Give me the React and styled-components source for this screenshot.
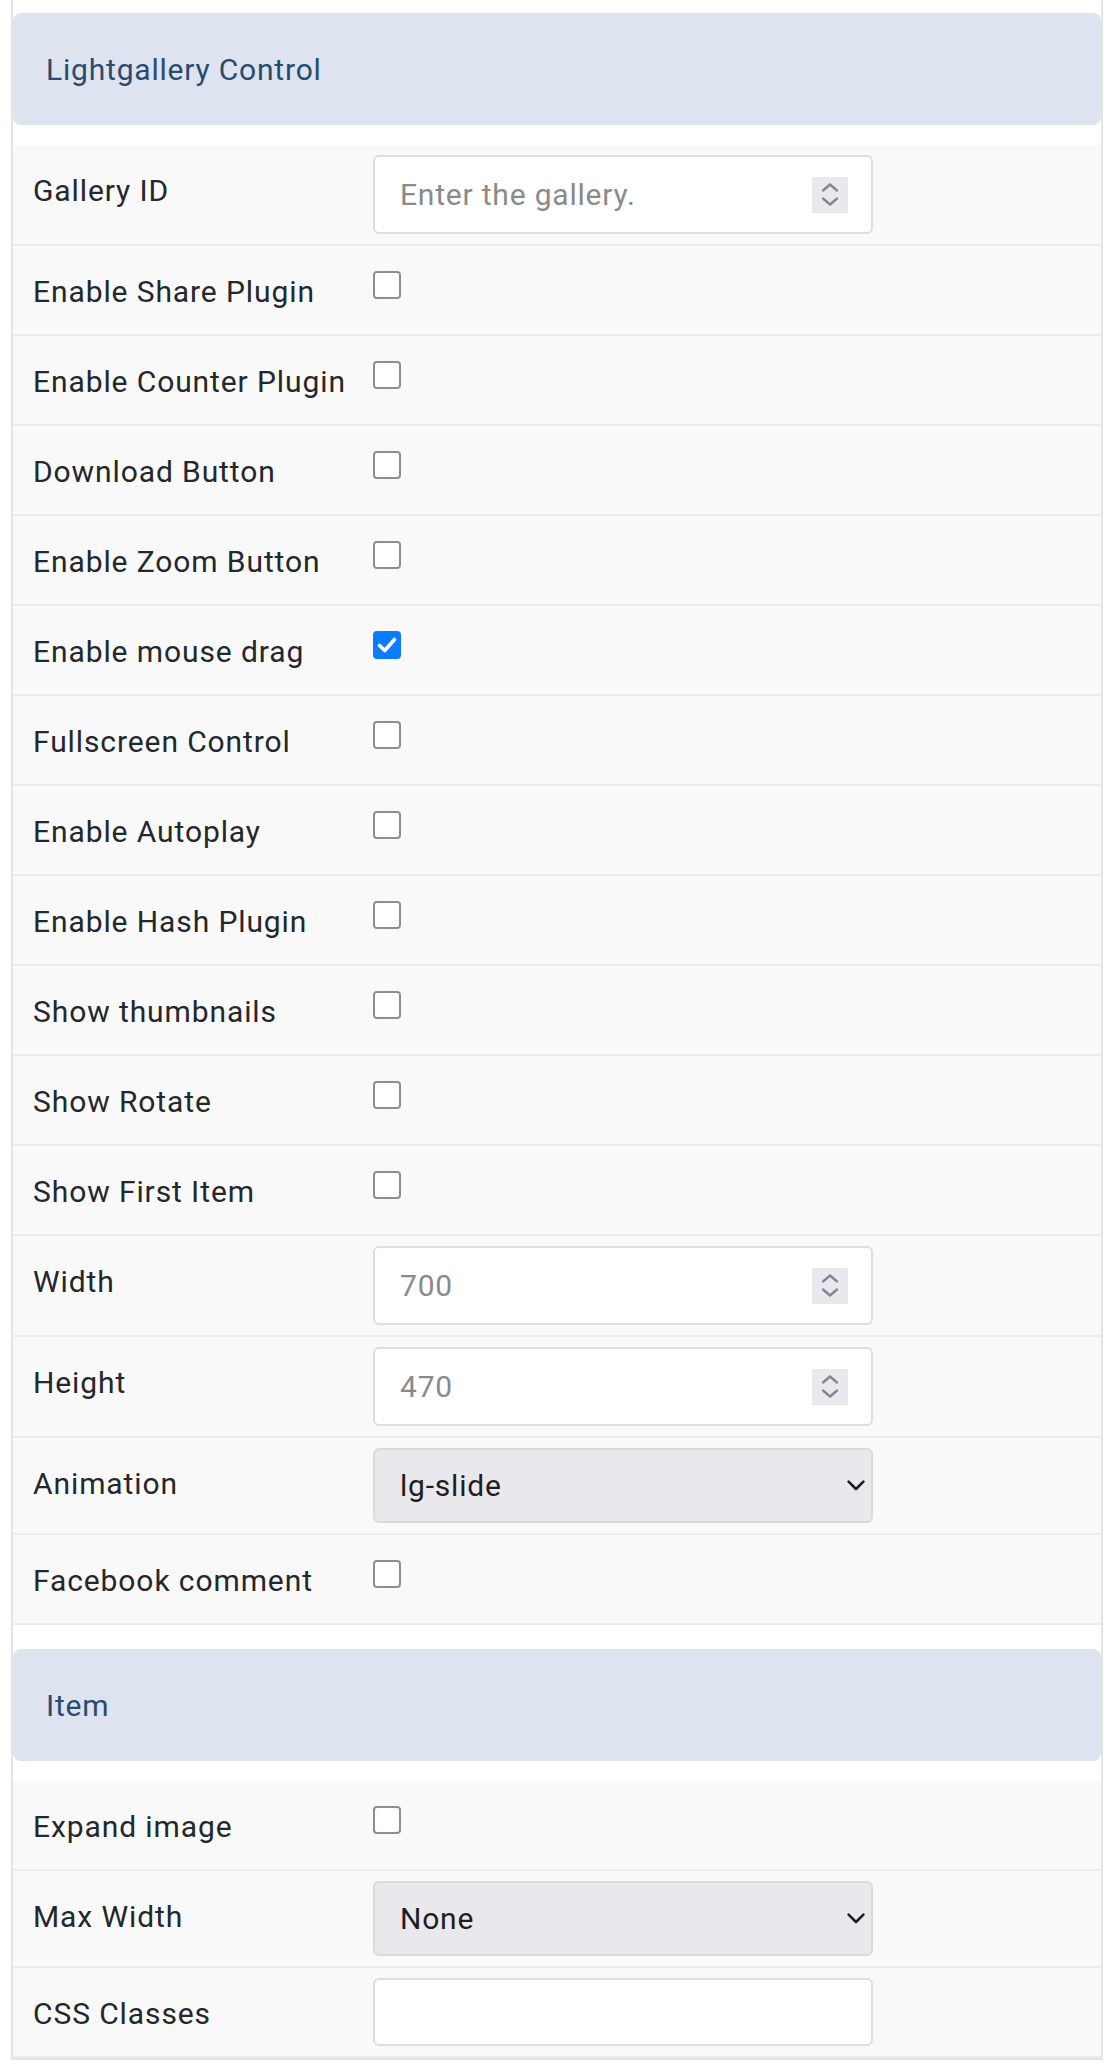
import React from "react"
import styled, { createGlobalStyle } from "styled-components"

const GlobalStyle = createGlobalStyle`
  * { box-sizing: border-box; }
  body {
    margin: 0;
    background: #ffffff;
    font-family: Roboto, "Liberation Sans", Arial, sans-serif;
    color: #212529;
  }
`

const sections = [
  {
    title: "Lightgallery Control",
    fields: [
      { label: "Gallery ID", kind: "number", placeholder: "Enter the gallery." },
      { label: "Enable Share Plugin", kind: "check" },
      { label: "Enable Counter Plugin", kind: "check" },
      { label: "Download Button", kind: "check" },
      { label: "Enable Zoom Button", kind: "check" },
      { label: "Enable mouse drag", kind: "check", checked: true },
      { label: "Fullscreen Control", kind: "check" },
      { label: "Enable Autoplay", kind: "check" },
      { label: "Enable Hash Plugin", kind: "check" },
      { label: "Show thumbnails", kind: "check" },
      { label: "Show Rotate", kind: "check" },
      { label: "Show First Item", kind: "check" },
      { label: "Width", kind: "number", placeholder: "700" },
      { label: "Height", kind: "number", placeholder: "470" },
      { label: "Animation", kind: "select", value: "lg-slide" },
      { label: "Facebook comment", kind: "check" },
    ],
  },
  {
    title: "Item",
    fields: [
      { label: "Expand image", kind: "check" },
      { label: "Max Width", kind: "select", value: "None" },
      { label: "CSS Classes", kind: "text" },
    ],
  },
]

function Spinner() {
  return (
    <SpinBox>
      <svg width="36" height="36" viewBox="0 0 36 36">
        <path
          d="M11 13.5 L18 7.5 L25 13.5 M11 21.5 L18 27.5 L25 21.5"
          fill="none"
          stroke="#87849a"
          strokeWidth="2.4"
          strokeLinecap="round"
          strokeLinejoin="round"
        />
      </svg>
    </SpinBox>
  )
}

function Checkbox({ checked }) {
  return (
    <Box $checked={checked} role="checkbox" aria-checked={!!checked}>
      {checked && (
        <svg width="24" height="24" viewBox="0 0 24 24">
          <path
            d="M4.5 12.5 L9.8 17.5 L19.5 6.5"
            fill="none"
            stroke="#ffffff"
            strokeWidth="3.6"
            strokeLinecap="round"
            strokeLinejoin="round"
          />
        </svg>
      )}
    </Box>
  )
}

function Control({ field }) {
  if (field.kind === "check") return <Checkbox checked={field.checked} />
  if (field.kind === "select")
    return (
      <SelectBox>
        <Select defaultValue={field.value}>
          <option>{field.value}</option>
        </Select>
        <Chevron width="18" height="11" viewBox="0 0 18 11">
          <path
            d="M1.6 1.6 L9 9 L16.4 1.6"
            fill="none"
            stroke="#1e1e1e"
            strokeWidth="2.6"
            strokeLinecap="round"
            strokeLinejoin="round"
          />
        </Chevron>
      </SelectBox>
    )
  if (field.kind === "text")
    return (
      <Field $short>
        <Input type="text" />
      </Field>
    )
  return (
    <Field>
      <Input type="text" placeholder={field.placeholder} />
      <Spinner />
    </Field>
  )
}

function App() {
  return (
    <>
      <GlobalStyle />
      <Panel>
        {sections.map((s) => (
          <Section key={s.title}>
            <Header>{s.title}</Header>
            {s.fields.map((f) => (
              <Row key={f.label}>
                <Label>{f.label}</Label>
                <Cell>
                  <Control field={f} />
                </Cell>
              </Row>
            ))}
          </Section>
        ))}
      </Panel>
    </>
  )
}

export default App

const Panel = styled.div`
  margin-left: 11px;
  width: 1092px;
  border-left: 2px solid #e4e4e4;
  border-right: 2px solid #e4e4e4;
  border-bottom: 2px solid #e4e4e4;
`
const Section = styled.section`
  padding-top: 13px;
  & + & {
    margin-top: 11px;
  }
`
const Header = styled.h2`
  margin: 0 0 20px;
  height: 112px;
  display: flex;
  align-items: center;
  padding: 0 33px;
  background: #dde4f0;
  border-radius: 8px;
  color: #2b4a6f;
  font-size: 30px;
  font-weight: 400;
  letter-spacing: 0.8px;
`
const Row = styled.div`
  display: grid;
  grid-template-columns: 340px 1fr;
  padding: 10px 0 10px 20px;
  background: #f9f9f9;
  border-bottom: 2px solid #ececec;
`
const Label = styled.label`
  padding: 13px 0 10px;
  font-size: 30px;
  line-height: 45px;
  letter-spacing: 0.9px;
  white-space: nowrap;
  color: #24272b;
`
const Cell = styled.div`
  display: flex;
  align-items: flex-start;
`
const Box = styled.span`
  margin-top: 15px;
  width: 28px;
  height: 28px;
  border-radius: 4px;
  border: ${(p) => (p.$checked ? "none" : "2px solid #8e8b9b")};
  background: ${(p) => (p.$checked ? "#0b7cff" : "#ffffff")};
  display: flex;
  align-items: center;
  justify-content: center;
`
const Field = styled.div`
  width: 500px;
  height: ${(p) => (p.$short ? "68px" : "79px")};
  display: flex;
  align-items: center;
  padding: 0 23px 0 25px;
  background: #ffffff;
  border: 2px solid #dedede;
  border-radius: 6px;
`
const Input = styled.input`
  flex: 1;
  min-width: 0;
  border: none;
  outline: none;
  background: transparent;
  padding: 0;
  font-family: inherit;
  font-size: 30px;
  letter-spacing: 0.8px;
  color: #212529;
  &::placeholder {
    color: #8a8a8a;
  }
`
const SpinBox = styled.span`
  width: 36px;
  height: 36px;
  background: #e9e9ed;
  display: flex;
`
const SelectBox = styled.div`
  position: relative;
  width: 500px;
  height: 75px;
`
const Select = styled.select`
  appearance: none;
  width: 100%;
  height: 100%;
  padding: 0 40px 0 25px;
  background: #e9e9ed;
  border: 2px solid #dadada;
  border-radius: 6px;
  font-family: inherit;
  font-size: 30px;
  letter-spacing: 0.8px;
  color: #1e1e1e;
  outline: none;
`
const Chevron = styled.svg`
  position: absolute;
  right: 8px;
  top: 32px;
  pointer-events: none;
`
